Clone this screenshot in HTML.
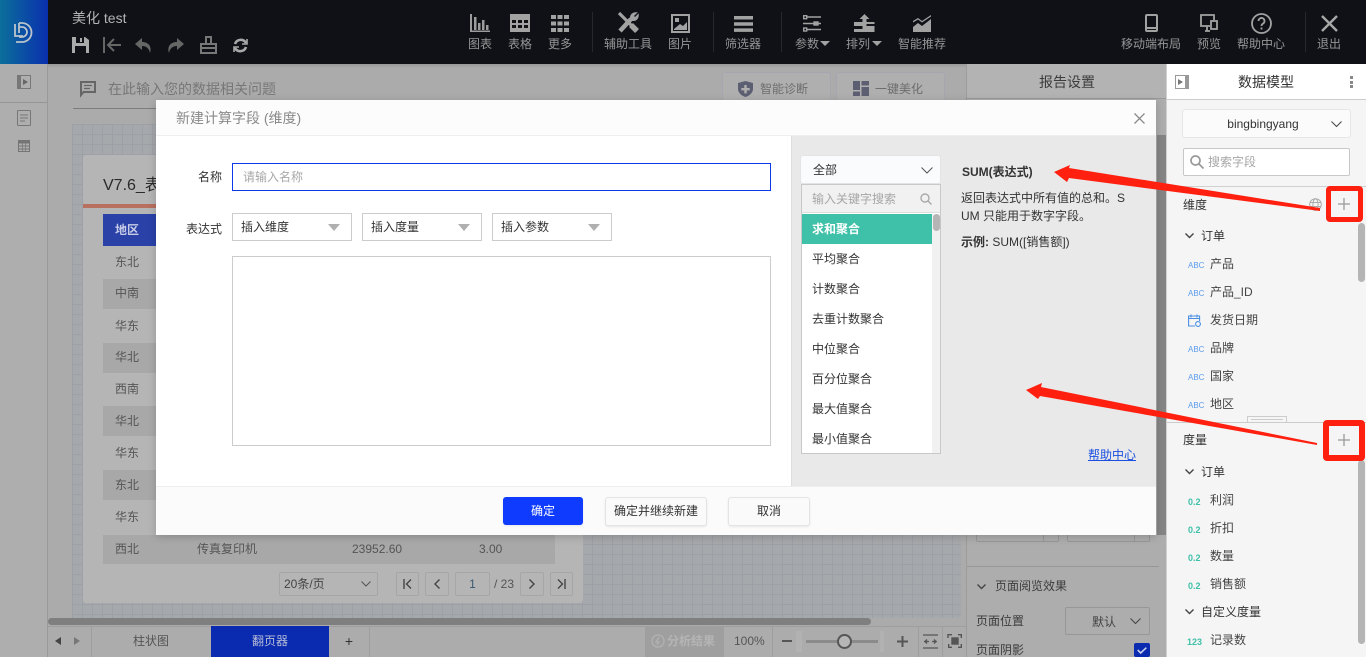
<!DOCTYPE html>
<html lang="zh">
<head>
<meta charset="utf-8">
<title>美化 test</title>
<style>
html,body{margin:0;padding:0;width:1366px;height:657px;overflow:hidden;background:#ababab}
body{position:relative;font:12px/16px "Liberation Sans","Noto Sans CJK SC",sans-serif;color:#333}
.a{position:absolute;box-sizing:border-box}
.t{position:absolute;white-space:nowrap;line-height:16px}
.c{transform:translateX(-50%)}
.tb{color:#969696;top:36px}
svg{position:absolute;overflow:visible}
.bb{position:absolute;box-sizing:border-box;background:#fafafa;border:1px solid #e4e4e4;border-radius:3px;text-align:center;line-height:26px;box-shadow:0 1px 2px rgba(0,0,0,.08)}
.sel{position:absolute;box-sizing:border-box;top:213px;width:120px;height:28px;border:1px solid #ccc;line-height:26px;padding-left:8px;background:#fff}
.sel i{position:absolute;right:11px;top:10px;width:0;height:0;border-left:6px solid transparent;border-right:6px solid transparent;border-top:7px solid #b0b0b0}
.pg{position:absolute;box-sizing:border-box;top:572px;height:24px;border:1px solid #a6a6a6;border-radius:2px;text-align:center;line-height:22px;color:#444}
.abc{position:absolute;white-space:nowrap;line-height:16px;font-size:8px;color:#5b9cea;left:1188px}
.num{position:absolute;white-space:nowrap;line-height:16px;font-size:9px;color:#3fc0a8;left:1188px;font-weight:bold}
</style>
</head>
<body>
<!-- top bar -->
<div class="a" style="left:0;top:0;width:1366px;height:64px;background:#0f1117"></div>
<div class="a" style="left:0;top:0;width:48px;height:64px;background:linear-gradient(90deg,#0b6f9b,#0a2fae)"></div>
<svg style="left:13px;top:21px" width="22" height="22" viewBox="0 0 22 22" fill="none" stroke="#b9c4cc" stroke-width="1.800"><path d="M2 3v12h8"/><path d="M6 2h3a9.500 9.500 0 0 1 0 19H3"/><path d="M6 2v10M6 6h3a5 5 0 0 1 0 10H6"/></svg>
<div class="t" style="left:72px;top:10px;color:#b4b4b4;font-size:14px">美化 test</div>

<svg style="left:72px;top:37px" width="17" height="16" viewBox="0 0 17 16"><path d="M0 0h13l4 3v13H0z" fill="#aaa"/><path d="M4 0h8v6H4z" fill="#0f1117"/><path d="M8 1h2v4H8z" fill="#aaa"/><path d="M3 9h11v7H3z" fill="#0f1117"/></svg>
<svg style="left:103px;top:37px" width="18" height="16" viewBox="0 0 18 16" fill="none" stroke="#666" stroke-width="2"><path d="M1 0v16M18 8H5M11 2 5 8l6 6"/></svg>
<svg style="left:135px;top:38px" width="17" height="15" viewBox="0 0 17 15"><path d="M7 0 0 6l7 6V8c4 0 7 2 8 7 2-6-1-11-8-11z" fill="#666"/></svg>
<svg style="left:167px;top:38px" width="17" height="15" viewBox="0 0 17 15"><path d="M10 0l7 6-7 6V8c-4 0-7 2-8 7-2-6 1-11 8-11z" fill="#666"/></svg>
<svg style="left:200px;top:36px" width="17" height="18" viewBox="0 0 17 18" fill="none" stroke="#777" stroke-width="2"><path d="M6 8V1h5v7M1 8h15v9H1zM1 12h15"/></svg>
<svg style="left:233px;top:38px" width="15" height="15" viewBox="0 0 15 15" fill="none" stroke="#a8a8a8" stroke-width="2.600"><path d="M2 6a6 6 0 0 1 11-1M13 9a6 6 0 0 1-11 1"/><path d="M14 1v5H9M1 14V9h5" stroke-width="1.600"/></svg>

<!-- toolbar icons -->
<svg style="left:470px;top:14px" width="20" height="18" viewBox="0 0 20 18" fill="#9c9c9c"><path d="M0 0h2v16.500H20V18H0z"/><path d="M4 3h2.500v13H4zM8 9h2.500v7H8zM12 6h2.500v10H12zM16 11h2.500v5H16z"/></svg>
<svg style="left:510px;top:14px" width="20" height="18" viewBox="0 0 20 18" fill="#a2a2a2"><path d="M0 0h20v18H0z"/><path d="M2 6h4v3H2zM8 6h4v3H8zM14 6h4v3h-4zM2 11h4v3H2zM8 11h4v3H8zM14 11h4v3h-4z" fill="#0f1117"/></svg>
<svg style="left:551px;top:15px" width="18" height="17" viewBox="0 0 18 17" fill="#a2a2a2"><path d="M0 0h5v4H0zM6.500 0h5v4h-5zM13 0h5v4h-5zM0 6.500h5v4H0zM6.500 6.500h5v4h-5zM13 6.500h5v4h-5zM0 13h5v4H0zM6.500 13h5v4h-5zM13 13h5v4h-5z"/></svg>
<div class="a" style="left:592px;top:12px;width:1px;height:40px;background:#262830"></div>
<svg style="left:617px;top:12px" width="22" height="22" viewBox="0 0 22 22" fill="none" stroke="#a2a2a2"><path d="M2 1 20 19" stroke-width="3.200"/><path d="M14 13l6 6" stroke-width="5.500"/><path d="M3 19 14 7" stroke-width="4.500"/><path d="M14 7c-1-3 1-6 5-6l-3 3 2 2 3-3c0 4-3 6-6 5z" fill="#a2a2a2" stroke-width="1.500"/></svg>
<svg style="left:671px;top:14px" width="19" height="19" viewBox="0 0 19 19"><path d="M0 0h19v19H0z" fill="#a2a2a2"/><path d="M2 2h15v15H2z" fill="#0f1117"/><path d="M4 4h4v4H4z" fill="#a2a2a2"/><path d="M3 15l6-5 3 2 4-4v8H3z" fill="#a2a2a2"/></svg>
<div class="a" style="left:713px;top:12px;width:1px;height:40px;background:#262830"></div>
<svg style="left:734px;top:16px" width="19" height="16" viewBox="0 0 19 16" fill="#a2a2a2"><path d="M0 0h19v3.500H0zM0 6.200h19v3.500H0zM0 12.400h19v3.500H0z"/></svg>
<div class="a" style="left:781px;top:12px;width:1px;height:40px;background:#262830"></div>
<svg style="left:803px;top:15px" width="18" height="17" viewBox="0 0 18 17" fill="none" stroke="#a2a2a2" stroke-width="1.400"><path d="M4 2h14M0 8.500h11M15 8.500h3M4 14.500h14"/><rect x=".7" y=".7" width="3" height="3"/><rect x="11" y="7" width="4" height="3" fill="#a2a2a2"/><rect x=".7" y="13" width="3" height="3"/></svg>
<svg style="left:854px;top:14px" width="21" height="18" viewBox="0 0 21 18" fill="#a2a2a2"><path d="M10.500 0l5 5h-3v3h8v2h-8v2h8v6H0v-3h8.500v-3H0V8h8.500V5h-3z"/></svg>
<svg style="left:913px;top:15px" width="19" height="17" viewBox="0 0 19 17" fill="#a2a2a2"><path d="M0 6l5-3 4 3 9-6v1.500l-9 6-4-3-5 3zM0 12l5-4 4 3 9-7v13H0z"/></svg>
<div class="a" style="left:1305px;top:12px;width:1px;height:40px;background:#262830"></div>
<svg style="left:1145px;top:14px" width="13" height="18" viewBox="0 0 13 18" fill="none" stroke="#a2a2a2" stroke-width="2"><rect x="1" y="1" width="11" height="16" rx="1"/><path d="M1 14h11"/></svg>
<svg style="left:1200px;top:14px" width="18" height="18" viewBox="0 0 18 18" fill="none" stroke="#a2a2a2" stroke-width="1.800"><path d="M10 12H1V1h13v5M5 17h5M7 12v5"/><rect x="11" y="7" width="6" height="8"/></svg>
<svg style="left:1251px;top:13px" width="21" height="21" viewBox="0 0 21 21" fill="none" stroke="#a2a2a2" stroke-width="1.800"><circle cx="10.500" cy="10.500" r="9.500"/><path d="M7.500 8a3 3 0 1 1 4.500 2.600c-1 .6-1.500 1-1.500 2.400M10.500 14.500v2"/></svg>
<svg style="left:1321px;top:15px" width="17" height="17" viewBox="0 0 17 17" fill="none" stroke="#a8a8a8" stroke-width="2.400"><path d="M1 1l15 15M16 1 1 16"/></svg>

<div class="t tb c" style="left:480px">图表</div>
<div class="t tb c" style="left:520px">表格</div>
<div class="t tb c" style="left:560px">更多</div>
<div class="t tb c" style="left:628px">辅助工具</div>
<div class="t tb c" style="left:680px">图片</div>
<div class="t tb c" style="left:743px">筛选器</div>
<div class="t tb c" style="left:807px">参数</div>
<div class="a" style="left:820px;top:41px;border-left:5px solid transparent;border-right:5px solid transparent;border-top:5px solid #a2a2a2"></div>
<div class="t tb c" style="left:858px">排列</div>
<div class="a" style="left:872px;top:41px;border-left:5px solid transparent;border-right:5px solid transparent;border-top:5px solid #a2a2a2"></div>
<div class="t tb c" style="left:922px">智能推荐</div>
<div class="t tb c" style="left:1151px">移动端布局</div>
<div class="t tb c" style="left:1209px">预览</div>
<div class="t tb c" style="left:1261px">帮助中心</div>
<div class="t tb c" style="left:1329px">退出</div>

<!-- left sidebar -->
<div class="a" style="left:0;top:64px;width:48px;height:593px;background:#aeaeae;border-right:1px solid #999"></div>
<div class="a" style="left:0;top:102px;width:47px;height:1px;background:#959595"></div>
<svg style="left:17px;top:75px" width="14" height="14" viewBox="0 0 14 14"><rect x=".5" y=".5" width="13" height="13" fill="none" stroke="#777"/><path d="M1 1h3v12H1z" fill="#777"/><path d="M6 4l5 3-5 3z" fill="#666"/></svg>
<svg style="left:17px;top:110px" width="14" height="16" viewBox="0 0 14 16" fill="none" stroke="#777"><rect x=".5" y=".5" width="13" height="15" rx="1"/><path d="M3 5h8M3 8h8M3 11h5"/></svg>
<svg style="left:18px;top:140px" width="12" height="12" viewBox="0 0 12 12"><path d="M0 0h12v12H0z" fill="#757575"/><path d="M1 3.500h3v2H1zM4.700 3.500h2.600v2H4.700zM8 3.500h3v2H8zM1 6.500h3v2H1zM4.700 6.500h2.600v2H4.700zM8 6.500h3v2H8zM1 9.500h3V11H1zM4.700 9.500h2.600V11H4.700zM8 9.500h3V11H8z" fill="#aeaeae"/></svg>

<!-- main -->
<div class="a" style="left:48px;top:64px;width:918px;height:4px;background:linear-gradient(#999,#ababab)"></div>
<svg style="left:80px;top:81px" width="16" height="15" viewBox="0 0 16 15" fill="none" stroke="#666" stroke-width="2"><path d="M1 1h14v10H3.500L1 14z"/><path d="M4 4.500h8M4 7.500h6" stroke-width="1.300"/></svg>
<div class="t" style="left:108px;top:81px;color:#777;font-size:14px">在此输入您的数据相关问题</div>
<div class="a" style="left:73px;top:108px;width:83px;height:1px;background:#7c7c7c"></div>
<div class="a" style="left:722px;top:72px;width:109px;height:30px;background:#afafaf;border:1px solid #a6a6b0;border-radius:3px"></div>
<div class="a" style="left:836px;top:72px;width:109px;height:30px;background:#afafaf;border:1px solid #a6a6b0;border-radius:3px"></div>
<svg style="left:738px;top:81px" width="15" height="16" viewBox="0 0 15 16"><path d="M7.500 0 15 2v6c0 4-4 7-7.500 8C4 15 0 12 0 8V2z" fill="#5c5f72"/><path d="M6.300 4h2.400v3h3v2.400h-3v3H6.300v-3h-3V7h3z" fill="#afafaf"/></svg>
<div class="t" style="left:760px;top:81px;color:#6d6d6d">智能诊断</div>
<svg style="left:853px;top:81px" width="16" height="15" viewBox="0 0 16 15" fill="#5c5f72"><path d="M0 0h7v9H0zM0 10.500h7V15H0zM8.500 0H16v4.500H8.500zM8.500 6H16v9H8.500z"/></svg>
<div class="t" style="left:875px;top:81px;color:#6d6d6d">一键美化</div>

<!-- canvas grid -->
<div class="a" style="left:72px;top:124px;width:889px;height:494px;background-color:#a6a9ac;background-image:linear-gradient(#9da1a7 1px,transparent 1px),linear-gradient(90deg,#9da1a7 1px,transparent 1px);background-size:10px 10px"></div>
<div class="a" style="left:83px;top:155px;width:500px;height:448px;background:#b5b5b5;border-radius:3px"></div>
<div class="t" style="left:103px;top:178px;font-size:16px;color:#2a2a2a">V7.6_表</div>
<div class="a" style="left:83px;top:204px;width:80px;height:4px;background:#b8705f"></div>
<div class="a" style="left:103px;top:214px;width:60px;height:32px;background:#2a42a8"></div>
<div class="t" style="left:115px;top:222px;color:#c8cde6;font-weight:bold">地区</div>
<div class="a" style="left:103px;top:279px;width:60px;height:30px;background:#a8a8a8"></div>
<div class="a" style="left:103px;top:343px;width:60px;height:30px;background:#a8a8a8"></div>
<div class="a" style="left:103px;top:406px;width:60px;height:30px;background:#a8a8a8"></div>
<div class="a" style="left:103px;top:470px;width:60px;height:30px;background:#a8a8a8"></div>
<div class="a" style="left:103px;top:535px;width:452px;height:29px;background:#a8a8a8"></div>
<div class="t" style="left:115px;top:254px;color:#555">东北</div>
<div class="t" style="left:115px;top:285px;color:#555">中南</div>
<div class="t" style="left:115px;top:318px;color:#555">华东</div>
<div class="t" style="left:115px;top:349px;color:#555">华北</div>
<div class="t" style="left:115px;top:381px;color:#555">西南</div>
<div class="t" style="left:115px;top:413px;color:#555">华北</div>
<div class="t" style="left:115px;top:445px;color:#555">华东</div>
<div class="t" style="left:115px;top:477px;color:#555">东北</div>
<div class="t" style="left:115px;top:509px;color:#555">华东</div>
<div class="t" style="left:115px;top:541px;color:#555">西北</div>
<div class="t" style="left:197px;top:541px;color:#555">传真复印机</div>
<div class="t" style="left:352px;top:541px;color:#555">23952.60</div>
<div class="t" style="left:479px;top:541px;color:#555">3.00</div>

<div class="pg" style="left:279px;width:99px;text-align:left;padding-left:4px">20条/页</div>
<svg style="left:361px;top:581px" width="10" height="6" viewBox="0 0 10 6" fill="none" stroke="#555"><path d="M.5.500 5 5 9.500.5"/></svg>
<div class="pg" style="left:396px;width:23px"></div>
<svg style="left:403px;top:579px" width="9" height="10" viewBox="0 0 9 10" fill="none" stroke="#444" stroke-width="1.400"><path d="M1 0v10M8 .5 3.500 5 8 9.500"/></svg>
<div class="pg" style="left:425px;width:24px"></div>
<svg style="left:434px;top:579px" width="6" height="10" viewBox="0 0 6 10" fill="none" stroke="#444" stroke-width="1.400"><path d="M5.500.5 1 5l4.500 4.500"/></svg>
<div class="pg" style="left:455px;width:35px;color:#3a5a70">1</div>
<div class="t" style="left:494px;top:576px;color:#555">/ 23</div>
<div class="pg" style="left:520px;width:24px"></div>
<svg style="left:529px;top:579px" width="6" height="10" viewBox="0 0 6 10" fill="none" stroke="#444" stroke-width="1.400"><path d="M.5.500 5 5 .5 9.500"/></svg>
<div class="pg" style="left:550px;width:23px"></div>
<svg style="left:557px;top:579px" width="9" height="10" viewBox="0 0 9 10" fill="none" stroke="#444" stroke-width="1.400"><path d="M8 0v10M1 .5 5.500 5 1 9.500"/></svg>

<!-- scrollbar and tabs -->
<div class="a" style="left:48px;top:618px;width:823px;height:7px;background:#7f7f7f;border-radius:4px"></div>
<div class="a" style="left:48px;top:626px;width:918px;height:31px;background:#acacac;border-top:1px solid #9e9e9e"></div>
<div class="a" style="left:55px;top:637px;border-top:4px solid transparent;border-bottom:4px solid transparent;border-right:6px solid #444"></div>
<div class="a" style="left:74px;top:637px;border-top:4px solid transparent;border-bottom:4px solid transparent;border-left:6px solid #777"></div>
<div class="a" style="left:91px;top:627px;width:1px;height:30px;background:#9e9e9e"></div>
<div class="t c" style="left:151px;top:633px;color:#555">柱状图</div>
<div class="a" style="left:211px;top:626px;width:118px;height:31px;background:#0a2ab0"></div>
<div class="t c" style="left:270px;top:633px;color:#b8bdd8">翻页器</div>
<div class="t c" style="left:349px;top:633px;color:#333;font-size:14px">+</div>
<div class="a" style="left:369px;top:627px;width:1px;height:30px;background:#9e9e9e"></div>
<div class="a" style="left:645px;top:626px;width:79px;height:31px;background:#9f9f9f"></div>
<svg style="left:651px;top:634px" width="14" height="14" viewBox="0 0 14 14" fill="none" stroke="#b2b2b2" stroke-width="1.300"><circle cx="7" cy="7" r="6"/><path d="M8 3 5 8h3l-2 3"/></svg>
<div class="t" style="left:667px;top:633px;color:#b5b5b5;font-weight:bold">分析结果</div>
<div class="t" style="left:734px;top:633px;color:#555">100%</div>
<div class="a" style="left:772px;top:627px;width:1px;height:30px;background:#9e9e9e"></div>
<div class="a" style="left:782px;top:640px;width:10px;height:2px;background:#555"></div>
<div class="a" style="left:796px;top:631px;width:6px;height:21px;background:#b2b2b2"></div>
<div class="a" style="left:806px;top:640px;width:72px;height:3px;background:#8b8b8b"></div>
<div class="a" style="left:837px;top:634px;width:15px;height:15px;background:#b6b6b6;border:2px solid #555;border-radius:50%"></div>
<div class="a" style="left:880px;top:631px;width:4px;height:21px;background:#b2b2b2"></div>
<svg style="left:897px;top:636px" width="11" height="11" viewBox="0 0 11 11"><path d="M4.500 0h2v4.500H11v2H6.500V11h-2V6.500H0v-2h4.500z" fill="#555"/></svg>
<div class="a" style="left:918px;top:627px;width:1px;height:30px;background:#9e9e9e"></div>
<svg style="left:923px;top:634px" width="15" height="15" viewBox="0 0 15 15" fill="none" stroke="#555" stroke-width="1.300"><path d="M0 1h15M0 14h15M1 7.500h5M9 7.500h5M4 5.500l-2 2 2 2M11 5.500l2 2-2 2"/></svg>
<div class="a" style="left:942px;top:627px;width:1px;height:30px;background:#9e9e9e"></div>
<svg style="left:948px;top:634px" width="14" height="14" viewBox="0 0 14 14" fill="none" stroke="#555" stroke-width="1.400"><path d="M0 4V.7h4M10 .7h3.300V4M13.300 10v3.300H10M4 13.300H.7V10"/><rect x="4" y="4" width="6" height="6" fill="#555"/></svg>

<!-- report settings -->
<div class="a" style="left:966px;top:64px;width:200px;height:593px;background:#adadad;border-left:1px solid #9c9c9c"></div>
<div class="a" style="left:967px;top:64px;width:199px;height:35px;background:#b3b3b3;border-bottom:1px solid #999"></div>
<div class="t c" style="left:1067px;top:74px;font-size:14px;color:#3c3c3c">报告设置</div>
<div class="a" style="left:1157px;top:135px;width:9px;height:400px;background:#858585"></div>
<div class="a" style="left:976px;top:525px;width:83px;height:17px;border:1px solid #979797;border-radius:2px"></div>
<div class="a" style="left:1043px;top:525px;width:1px;height:17px;background:#979797"></div>
<div class="a" style="left:1067px;top:525px;width:83px;height:17px;border:1px solid #979797;border-radius:2px"></div>
<div class="a" style="left:1134px;top:525px;width:1px;height:17px;background:#979797"></div>
<div class="a" style="left:967px;top:566px;width:192px;height:1px;background:#979797"></div>
<svg style="left:977px;top:584px" width="9" height="6" viewBox="0 0 9 6" fill="none" stroke="#444" stroke-width="1.400"><path d="M.5.500l4 4 4-4"/></svg>
<div class="t" style="left:995px;top:578px;color:#3c3c3c">页面阅览效果</div>
<div class="t" style="left:976px;top:613px;color:#3c3c3c">页面位置</div>
<div class="a" style="left:1065px;top:607px;width:85px;height:28px;border:1px solid #979797;border-radius:2px"></div>
<div class="t" style="left:1092px;top:614px;color:#444">默认</div>
<svg style="left:1130px;top:618px" width="11" height="7" viewBox="0 0 11 7" fill="none" stroke="#444"><path d="M.5.500l5 5 5-5"/></svg>
<div class="t" style="left:976px;top:642px;color:#3c3c3c">页面阴影</div>
<div class="a" style="left:1134px;top:643px;width:16px;height:14px;background:#0a2bb0;border-radius:2px"></div>
<svg style="left:1137px;top:647px" width="10" height="7" viewBox="0 0 10 7" fill="none" stroke="#c9d0ea" stroke-width="1.600"><path d="M.7 3l3 3L9.300.7"/></svg>

<!-- data model -->
<div class="a" style="left:1166px;top:64px;width:200px;height:593px;background:#f5f5f5;border-left:1px solid #d0d0d0"></div>
<div class="a" style="left:1167px;top:64px;width:199px;height:36px;background:#fff;border-bottom:1px solid #ccc"></div>
<svg style="left:1175px;top:75px" width="14" height="14" viewBox="0 0 14 14"><rect x=".5" y=".5" width="13" height="13" fill="none" stroke="#999"/><path d="M10 1h3v12h-3z" fill="#999"/><path d="M3 4l5 3-5 3z" fill="#777"/></svg>
<div class="t c" style="left:1266px;top:74px;font-size:14px;color:#333">数据模型</div>
<div class="a" style="left:1350px;top:76px;width:3px;height:3px;background:#888"></div>
<div class="a" style="left:1350px;top:81px;width:3px;height:3px;background:#888"></div>
<div class="a" style="left:1350px;top:85px;width:3px;height:3px;background:#888"></div>
<div class="a" style="left:1182px;top:109px;width:169px;height:29px;background:#fbfbfc;border:1px solid #e6e6e6;border-radius:3px"></div>
<div class="t c" style="left:1263px;top:116px;color:#333">bingbingyang</div>
<svg style="left:1331px;top:121px" width="11" height="7" viewBox="0 0 11 7" fill="none" stroke="#444"><path d="M.5.500l5 5 5-5"/></svg>
<div class="a" style="left:1183px;top:148px;width:167px;height:28px;background:#fff;border:1px solid #c8c8c8;border-radius:2px"></div>
<svg style="left:1190px;top:155px" width="14" height="14" viewBox="0 0 14 14" fill="none" stroke="#999" stroke-width="1.700"><circle cx="5.500" cy="5.500" r="4.500"/><path d="M9 9l4.500 4.500"/></svg>
<div class="t" style="left:1208px;top:154px;color:#a6a6a6">搜索字段</div>
<div class="a" style="left:1167px;top:186px;width:199px;height:1px;background:#d0d0d0"></div>
<div class="t" style="left:1183px;top:197px;color:#333">维度</div>
<svg style="left:1309px;top:198px" width="13" height="13" viewBox="0 0 13 13" fill="none" stroke="#aaa"><circle cx="6.500" cy="6.500" r="5.800"/><ellipse cx="6.500" cy="6.500" rx="2.600" ry="5.800"/><path d="M1 4.500h11M1 8.500h11"/></svg>
<svg style="left:1338px;top:198px" width="12" height="12" viewBox="0 0 12 12" fill="none" stroke="#999" stroke-width="1.300"><path d="M6 0v12M0 6h12"/></svg>
<svg style="left:1338px;top:434px" width="12" height="12" viewBox="0 0 12 12" fill="none" stroke="#999" stroke-width="1.300"><path d="M6 0v12M0 6h12"/></svg>

<svg style="left:1185px;top:233px" width="9" height="6" viewBox="0 0 9 6" fill="none" stroke="#444" stroke-width="1.400"><path d="M.5.500l4 4 4-4"/></svg>
<div class="t" style="left:1201px;top:228px">订单</div>
<div class="abc" style="top:258px">ABC</div>
<div class="t" style="left:1210px;top:256px;color:#444">产品</div>
<div class="abc" style="top:286px">ABC</div>
<div class="t" style="left:1210px;top:284px;color:#444">产品_ID</div>
<svg style="left:1188px;top:314px" width="13" height="13" viewBox="0 0 13 13" fill="none" stroke="#4a90e2" stroke-width="1.100"><path d="M7 12H.6V2h11v5M3 .5v3M9 .5v3M.6 4.500h11"/><circle cx="10" cy="10" r="2.400"/></svg>
<div class="t" style="left:1210px;top:312px;color:#444">发货日期</div>
<div class="abc" style="top:342px">ABC</div>
<div class="t" style="left:1210px;top:340px;color:#444">品牌</div>
<div class="abc" style="top:370px">ABC</div>
<div class="t" style="left:1210px;top:368px;color:#444">国家</div>
<div class="abc" style="top:398px">ABC</div>
<div class="t" style="left:1210px;top:396px;color:#444">地区</div>
<div class="a" style="left:1358px;top:223px;width:7px;height:59px;background:#b5b5b5;border-radius:4px"></div>
<div class="a" style="left:1247px;top:416px;width:40px;height:7px;background:#f5f5f5;border:1px solid #ccc"></div>
<div class="a" style="left:1251px;top:419px;width:32px;height:1px;background:#ccc"></div>
<div class="a" style="left:1167px;top:422px;width:199px;height:1px;background:#ccc"></div>
<div class="t" style="left:1183px;top:432px;color:#333">度量</div>
<svg style="left:1185px;top:469px" width="9" height="6" viewBox="0 0 9 6" fill="none" stroke="#444" stroke-width="1.400"><path d="M.5.500l4 4 4-4"/></svg>
<div class="t" style="left:1201px;top:464px">订单</div>
<div class="num" style="top:494px">0.2</div>
<div class="t" style="left:1210px;top:492px;color:#444">利润</div>
<div class="num" style="top:522px">0.2</div>
<div class="t" style="left:1210px;top:520px;color:#444">折扣</div>
<div class="num" style="top:550px">0.2</div>
<div class="t" style="left:1210px;top:548px;color:#444">数量</div>
<div class="num" style="top:578px">0.2</div>
<div class="t" style="left:1210px;top:576px;color:#444">销售额</div>
<svg style="left:1185px;top:609px" width="9" height="6" viewBox="0 0 9 6" fill="none" stroke="#444" stroke-width="1.400"><path d="M.5.500l4 4 4-4"/></svg>
<div class="t" style="left:1201px;top:604px">自定义度量</div>
<div class="num" style="top:634px;left:1187px">123</div>
<div class="t" style="left:1210px;top:632px;color:#444">记录数</div>
<div class="a" style="left:1358px;top:460px;width:7px;height:184px;background:#b5b5b5;border-radius:4px"></div>

<!-- dialog -->
<div class="a" style="left:156px;top:100px;width:1000px;height:435px;background:#fff;box-shadow:0 2px 8px rgba(0,0,0,.18)"></div>
<div class="a" style="left:156px;top:100px;width:1000px;height:36px;background:#fcfcfc;border-bottom:1px solid #eee"></div>
<div class="t" style="left:176px;top:110px;font-size:14px;color:#8a8a8a">新建计算字段 (维度)</div>
<svg style="left:1134px;top:113px" width="11" height="11" viewBox="0 0 11 11" fill="none" stroke="#888" stroke-width="1.300"><path d="M.5.500l10 10M10.500.5l-10 10"/></svg>
<div class="t" style="left:198px;top:169px;color:#333">名称</div>
<div class="a" style="left:232px;top:163px;width:539px;height:28px;border:1px solid #0b38e8"></div>
<div class="t" style="left:243px;top:169px;color:#a8a8a8">请输入名称</div>
<div class="t" style="left:186px;top:221px;color:#333">表达式</div>
<div class="sel" style="left:232px">插入维度<i></i></div>
<div class="sel" style="left:362px">插入度量<i></i></div>
<div class="sel" style="left:492px">插入参数<i></i></div>
<div class="a" style="left:232px;top:256px;width:539px;height:190px;border:1px solid #ccc"></div>

<div class="a" style="left:791px;top:136px;width:365px;height:351px;background:#e9e9e9;border-left:1px solid #dedede"></div>
<div class="a" style="left:800px;top:155px;width:141px;height:29px;background:#fafbfc;border-radius:3px;border:1px solid #e4e4e4;padding-left:12px;line-height:28px">全部</div>
<svg style="left:921px;top:167px" width="12" height="7" viewBox="0 0 12 7" fill="none" stroke="#555"><path d="M.5.500l5.500 5.500 5.500-5.500"/></svg>
<div class="a" style="left:801px;top:184px;width:140px;height:270px;background:#fff;border:1px solid #c8c8c8"></div>
<div class="a" style="left:802px;top:185px;width:138px;height:28px;background:#f1f1f1;border-bottom:1px solid #ddd"></div>
<div class="t" style="left:812px;top:191px;color:#a6a6a6">输入关键字搜索</div>
<svg style="left:920px;top:193px" width="12" height="12" viewBox="0 0 12 12" fill="none" stroke="#aaa" stroke-width="1.400"><circle cx="5" cy="5" r="4"/><path d="M8 8l3.500 3.500"/></svg>
<div class="a" style="left:802px;top:214px;width:130px;height:30px;background:#3fc0a8"></div>
<div class="a" style="left:932px;top:214px;width:8px;height:239px;background:#f1f1f1"></div>
<div class="a" style="left:933px;top:214px;width:7px;height:17px;background:#b5b5b5;border-radius:4px"></div>
<div class="t" style="left:812px;top:221px;color:#fff;font-weight:bold">求和聚合</div>
<div class="t" style="left:812px;top:251px">平均聚合</div>
<div class="t" style="left:812px;top:281px">计数聚合</div>
<div class="t" style="left:812px;top:311px">去重计数聚合</div>
<div class="t" style="left:812px;top:341px">中位聚合</div>
<div class="t" style="left:812px;top:371px">百分位聚合</div>
<div class="t" style="left:812px;top:401px">最大值聚合</div>
<div class="t" style="left:812px;top:431px">最小值聚合</div>
<div class="t" style="left:962px;top:164px;font-weight:bold">SUM(表达式)</div>
<div class="t" style="left:961px;top:190px">返回表达式中所有值的总和。S</div>
<div class="t" style="left:961px;top:208px">UM 只能用于数字字段。</div>
<div class="t" style="left:961px;top:234px"><b>示例:</b> SUM([销售额])</div>
<div class="t" style="left:1088px;top:447px;color:#1a4fe0;text-decoration:underline">帮助中心</div>

<div class="a" style="left:156px;top:486px;width:1000px;height:49px;background:#fbfbfc;border-top:1px solid #eee"></div>
<div class="bb" style="left:503px;top:497px;width:80px;height:28px;background:#0f3bff;border:0;color:#fff;line-height:28px">确定</div>
<div class="bb" style="left:605px;top:497px;width:102px;height:29px">确定并继续新建</div>
<div class="bb" style="left:728px;top:497px;width:82px;height:29px">取消</div>

<!-- red annotations -->
<div class="a" style="left:1326px;top:186px;width:37px;height:36px;border:5px solid #ff2010;border-radius:4px"></div>
<div class="a" style="left:1323px;top:420px;width:42px;height:41px;border:6px solid #ff2010;border-radius:4px"></div>
<svg style="left:0;top:0" width="1366" height="657" viewBox="0 0 1366 657" fill="#ff2010">
<path d="M1054 172 1070 165 1069 168 1320 208 1320 211 1069 178 1067 182z"/>
<path d="M1026 390 1042 383 1041 387 1317 443 1317 445 1040 396 1038 399z"/>
</svg>
</body>
</html>
